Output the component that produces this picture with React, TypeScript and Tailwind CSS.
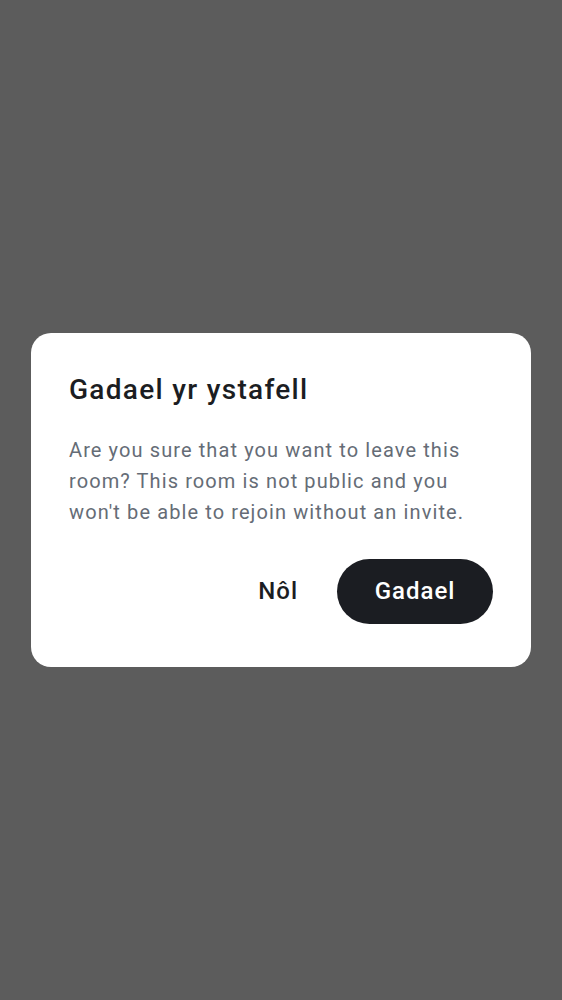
import React from "react";

const App = () => {
  return (
    <div
      className="w-[562px] h-[1000px] bg-[#5c5c5c] flex items-center justify-center"
      style={{ fontFamily: "Roboto, 'Liberation Sans', sans-serif" }}
    >
      {/* leave room dialog */}
      <div className="w-[500px] bg-white rounded-[20px] pt-[39px] pb-[43px] px-[38px] -mt-[1px]">
        <h2 className="text-[28px] leading-[36px] font-medium tracking-[1.3px] text-[#1b1d22]">
          Gadael yr ystafell
        </h2>
        <p className="mt-[27px] text-[20px] leading-[31px] tracking-[1.1px] text-[#656c76]">
          Are you sure that you want to leave this room? This room is not public and you
          won't be able to rejoin without an invite.
        </p>
        {/* actions */}
        <div className="flex items-center justify-end gap-[15px] mt-[31px]">
          <button className="h-[65px] px-[24px] rounded-full text-[24px] font-medium tracking-[1px] text-[#1b1d22]">
            Nôl
          </button>
          <button className="h-[65px] w-[156px] rounded-full bg-[#1b1d22] text-[24px] font-medium tracking-[1px] text-white">
            Gadael
          </button>
        </div>
      </div>
    </div>
  );
};

export default App;
